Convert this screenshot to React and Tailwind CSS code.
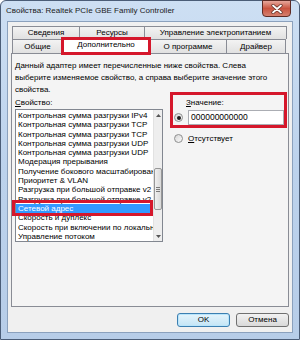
import React from 'react';

const items = [
  'Контрольная сумма разгрузки IPv4',
  'Контрольная сумма разгрузки TCP',
  'Контрольная сумма разгрузки TCP',
  'Контрольная сумма разгрузки UDP',
  'Контрольная сумма разгрузки UDP',
  'Модерация прерывания',
  'Получение бокового масштабирования',
  'Приоритет & VLAN',
  'Разгрузка при большой отправке v2 (IPv4)',
  'Разгрузка при большой отправке v2 (IPv6)',
  'Сетевой адрес',
  'Скорость и дуплекс',
  'Скорость при включении по локальной сети',
  'Управление потоком',
];

function Tab({ label, className = '' }) {
  return (
    <div
      className={`flex items-center justify-center border border-b-0 border-[#898c95] bg-gradient-to-b from-[#f3f3f3] to-[#e1e1e1] whitespace-nowrap ${className}`}
    >
      {label}
    </div>
  );
}

function Radio({ checked }) {
  return (
    <div className="w-[9px] h-[9px] rounded-full border border-[#8e8f8f] bg-gradient-to-br from-[#d6d6d6] to-[#fbfbfb] flex items-center justify-center shrink-0">
      {checked && <div className="w-[4px] h-[4px] rounded-full bg-[#1c1c1c]" />}
    </div>
  );
}

export default function App() {
  return (
    <div className="w-[300px] h-[340px] font-['Liberation_Sans',Arial,sans-serif] text-[8px] text-black leading-none">
      <div className="w-full h-full flex flex-col border border-[#4b5d77] rounded-t-[6px] bg-gradient-to-b from-[#cddff3] via-[#bcd2ec] to-[#b7cde8]">
        {/* title bar */}
        <div className="h-[20px] flex items-start justify-between shrink-0">
          <div className="pl-[5px] pt-[6px] text-[8px] text-[#1b1b1b]">
            Свойства: Realtek PCIe GBE Family Controller
          </div>
          <div className="mr-[8px] -mt-px w-[29px] h-[17px] rounded-b-[4px] border border-[#5e2b25] bg-gradient-to-b from-[#e6a79c] via-[#c9533f] to-[#d5806f] flex items-center justify-center">
            <svg width="12" height="10" viewBox="0 0 12 10">
              <path d="M2 1.5 L10 8.5 M10 1.5 L2 8.5" stroke="#5a2a22" strokeWidth="3.2" strokeLinecap="round" />
              <path d="M2 1.5 L10 8.5 M10 1.5 L2 8.5" stroke="#ffffff" strokeWidth="1.8" strokeLinecap="round" />
            </svg>
          </div>
        </div>

        {/* client area */}
        <div className="flex-1 mx-[6px] mb-[6px] border border-[#8ba1bd] bg-[#f0f0f0] pl-[3px] pt-[4px] flex flex-col">
          {/* tabs row 1 */}
          <div className="flex h-[13px] pl-px">
            <Tab label="Сведения" className="w-[68px]" />
            <Tab label="Ресурсы" className="w-[66px] -ml-px" />
            <Tab label="Управление электропитанием" className="w-[143px] -ml-px" />
          </div>
          {/* tabs row 2 */}
          <div className="flex h-[14px] pl-px items-start">
            <Tab label="Общие" className="w-[51px] h-[14px]" />
            <div className="relative z-10 -ml-[2px] -mt-[2px] w-[90px] h-[18px] border-[3px] border-[#d5172b] bg-white flex items-center justify-center pb-[2px]">
              Дополнительно
            </div>
            <Tab label="О программе" className="w-[78px] h-[14px] -ml-[2px]" />
            <Tab label="Драйвер" className="w-[60px] h-[14px] -ml-px" />
          </div>

          {/* panel */}
          <div className="w-[278px] h-[254px] border border-[#898c95] bg-[#f4f4f4] pl-[3px] pt-[6px]">
            <div className="leading-[12px] h-[36px]">
              Данный адаптер имеет перечисленные ниже свойства. Слева
              <br />
              выберите изменяемое свойство, а справа выберите значение этого
              <br />
              свойства.
            </div>

            <div className="flex items-start mt-px">
              {/* property list */}
              <div className="w-[148px] shrink-0">
                <div className="h-[12px] leading-[11px]">
                  <span className="underline">С</span>войство:
                </div>
                <div className="relative w-[148px] h-[133px] border border-[#828790] bg-white flex">
                  <div className="flex-1 overflow-hidden pt-px">
                    {items.map((it, i) => (
                      <div
                        key={i}
                        className={`h-[9.3px] leading-[9.3px] whitespace-nowrap pl-[2px] ${
                          i === 10 ? 'bg-[#3399ff] text-white' : ''
                        }`}
                      >
                        {it}
                      </div>
                    ))}
                  </div>
                  {/* scrollbar */}
                  <div className="w-[9px] bg-[#eeeeee] border-l border-[#e2e2e2] flex flex-col items-center">
                    <div className="h-[10px] flex items-center justify-center">
                      <svg width="5" height="3" viewBox="0 0 5 3">
                        <path d="M0 3 L2.5 0 L5 3 Z" fill="#555" />
                      </svg>
                    </div>
                    <div className="mt-[48px] w-[8px] h-[42px] rounded-[2px] border border-[#979797] bg-gradient-to-r from-[#f0f0f0] to-[#d9d9d9] flex flex-col items-center justify-center gap-px">
                      <div className="w-[4px] h-px bg-[#7a7a7a]" />
                      <div className="w-[4px] h-px bg-[#7a7a7a]" />
                      <div className="w-[4px] h-px bg-[#7a7a7a]" />
                    </div>
                    <div className="mt-auto h-[10px] flex items-center justify-center">
                      <svg width="5" height="3" viewBox="0 0 5 3">
                        <path d="M0 0 L2.5 3 L5 0 Z" fill="#555" />
                      </svg>
                    </div>
                  </div>
                  {/* annotation */}
                  <div className="absolute left-[-4px] top-[90px] w-[141px] h-[16px] border-[3px] border-[#d5172b] pointer-events-none" />
                </div>
              </div>

              {/* value */}
              <div className="relative ml-[7px] w-[117px]">
                <div className="h-[12px] leading-[11px] pl-[16px]">
                  <span className="underline">З</span>начение:
                </div>
                <div className="flex items-center mt-px pl-[4px]">
                  <Radio checked />
                  <div className="ml-[5px] w-[96px] h-[15px] border border-[#abadb3] bg-white flex items-center pl-[2px] text-[8.5px]">
                    000000000000
                  </div>
                </div>
                <div className="flex items-center mt-[9px] pl-[4px]">
                  <Radio />
                  <div className="ml-[5px]">
                    <span className="underline">О</span>тсутствует
                  </div>
                </div>
                {/* annotation */}
                <div className="absolute left-0 top-[-5px] w-[117px] h-[36px] border-[3px] border-[#d5172b] pointer-events-none" />
              </div>
            </div>
          </div>

          {/* buttons */}
          <div className="flex justify-end gap-[6px] pr-[3px] mt-[6px]">
            <div className="w-[53px] h-[14px] rounded-[3px] border border-[#3c7fb1] bg-gradient-to-b from-[#e5f4fc] to-[#c4e5f6] shadow-[inset_0_0_0_1px_#b9e5fb] flex items-center justify-center">
              OK
            </div>
            <div className="w-[53px] h-[14px] rounded-[3px] border border-[#707070] bg-gradient-to-b from-[#f2f2f2] to-[#d9d9d9] flex items-center justify-center">
              Отмена
            </div>
          </div>
        </div>
      </div>
    </div>
  );
}
